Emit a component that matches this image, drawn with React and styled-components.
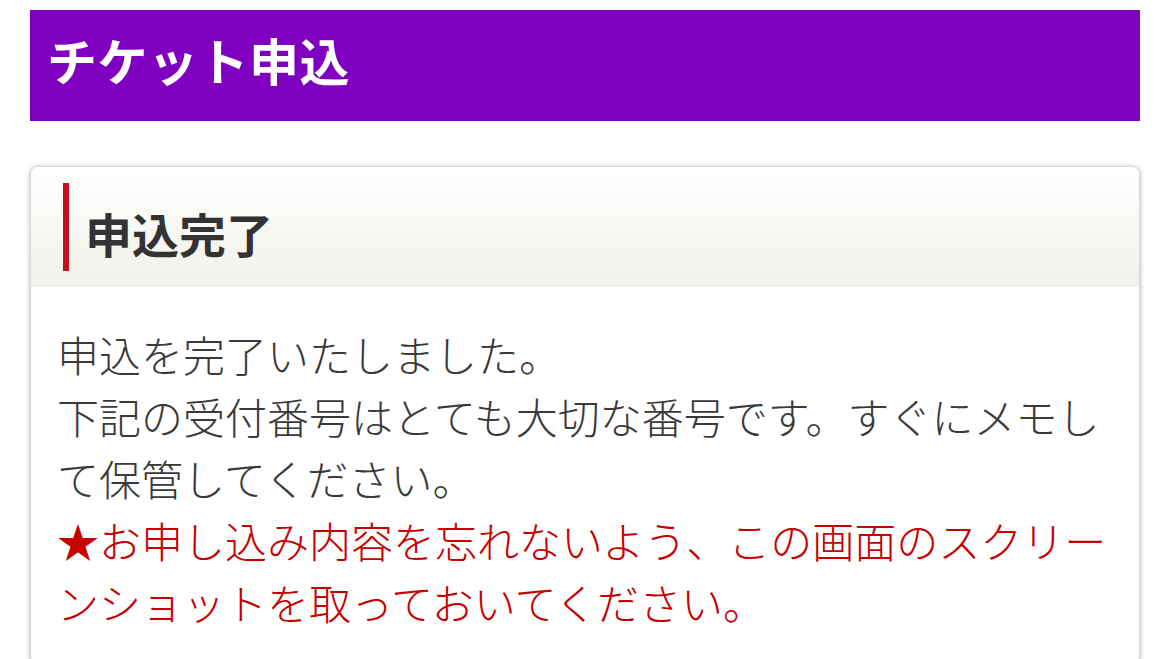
import styled, { createGlobalStyle } from 'styled-components';

const GlobalStyle = createGlobalStyle`
html, body {
  margin:0;
  padding:0;
  background:#fff;
}
body {
  font-family:"Noto Sans CJK JP", "Noto Sans", sans-serif;
  color:#333;
}
`;

const Page = styled.div`
display:flex;
flex-direction:column;
gap:45px;
padding:10px 29px 40px 30px;
`;

const TitleBar = styled.h1`
margin:0;
background-color:#7f00bf;
color:#fff;
height:111px;
box-sizing:border-box;
display:flex;
align-items:center;
padding:0 0 14px 17px;
font-size:50px;
font-weight:bold;
letter-spacing:0.5px;
`;

const Card = styled.section`
border:1px solid #d8d8d8;
border-radius:8px;
box-shadow:0 1px 5px rgba(0,0,0,0.3);
overflow:hidden;
background:#fff;
`;

const CardHead = styled.div`
padding:16px 32px;
background:linear-gradient(to bottom, #ffffff 0%, #f1f0e9 100%);
`;

const HeadTitle = styled.h2`
margin:0;
height:88px;
box-sizing:border-box;
border-left:6px solid #c4121c;
padding:18px 0 0 16px;
font-size:47px;
line-height:64px;
font-weight:bold;
color:#333;
`;

const CardBody = styled.div`
padding:36px 26px 30px 26px;
font-size:42px;
font-weight:300;
line-height:62px;
color:#3a3a3a;
`;

const Para = styled.p`
margin:0;
color:${p => p.$alert ? '#c70000' : '#3a3a3a'};
`;

function App() {
  return (
    <Page>
      <GlobalStyle />
      <TitleBar>チケット申込</TitleBar>
      <Card>
        <CardHead>
          <HeadTitle>申込完了</HeadTitle>
        </CardHead>
        <CardBody>
          <Para>申込を完了いたしました。</Para>
          <Para>下記の受付番号はとても大切な番号です。すぐにメモして保管してください。</Para>
          <Para $alert>★お申し込み内容を忘れないよう、この画面のスクリーンショットを取っておいてください。</Para>
        </CardBody>
      </Card>
    </Page>
  );
}

export default App;
